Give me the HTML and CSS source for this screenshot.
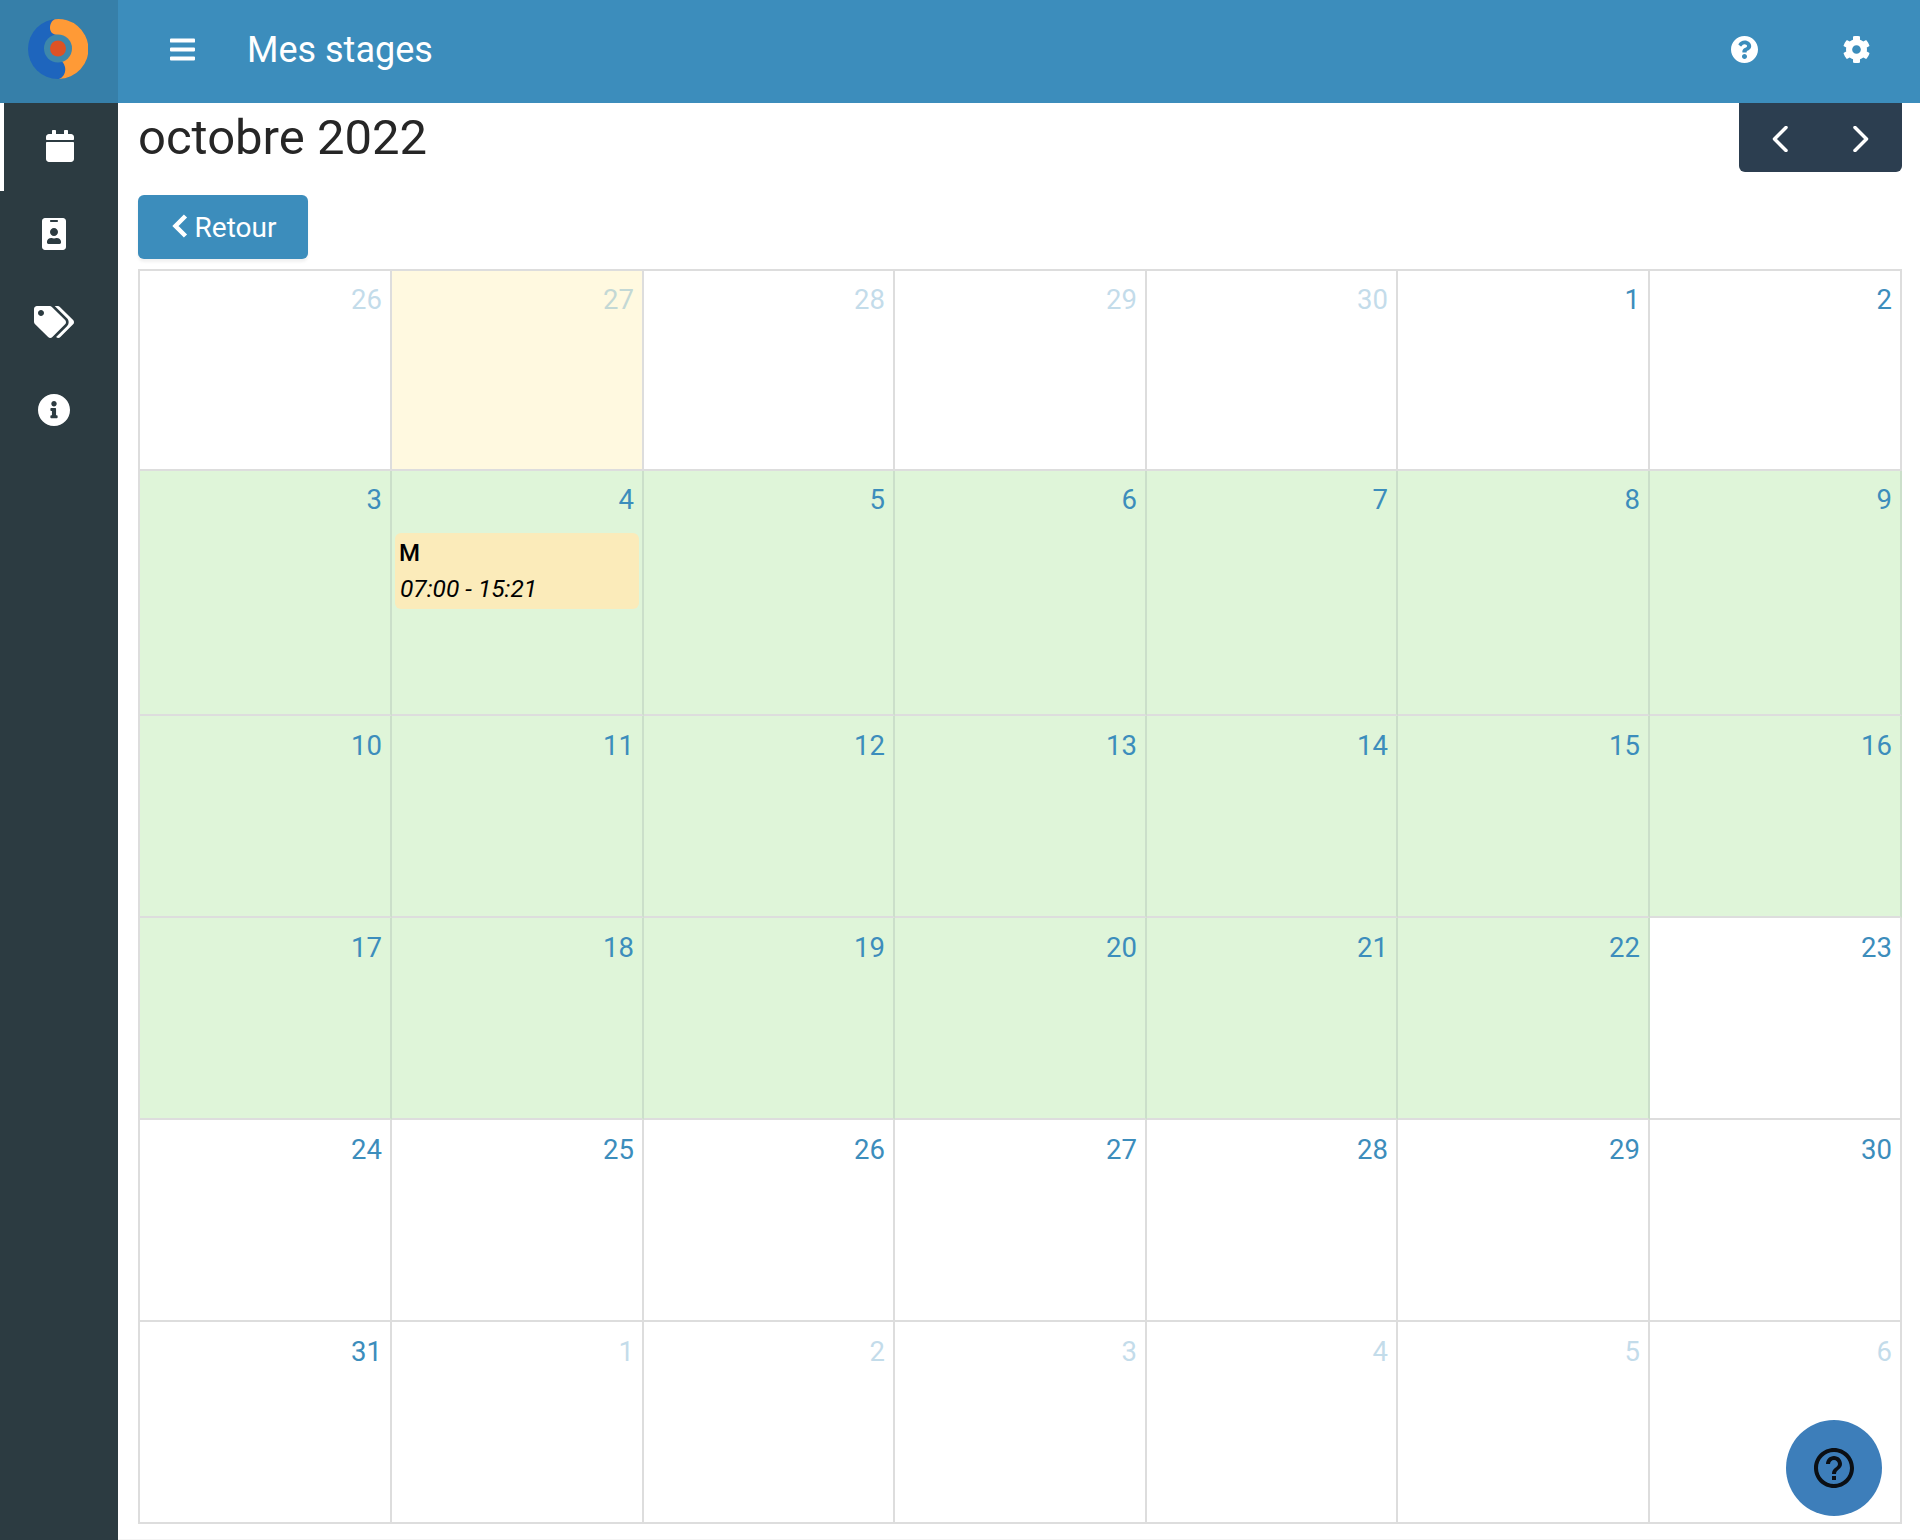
FILE: index.html
```html
<!DOCTYPE html>
<html lang="fr">
<head>
<meta charset="utf-8">
<title>Mes stages</title>
<link rel="stylesheet" href="styles.css">
</head>
<body>
<div class="app">
  <a class="brand" href="#" aria-label="Accueil">
    <svg class="logo" viewBox="0 0 60 60">
      <circle cx="30" cy="30" r="30" fill="#1e65bd"/>
      <path d="M27 .2A30 30 0 1 1 31 60C36 58 38 53 37 48C36 44 34 42 33 42A14 14 0 0 0 30 16C24 16 22 12 22 9C22 5 24 1 27 .2Z" fill="#ff9a36"/>
      <circle cx="30" cy="29.500" r="14" fill="#3d87ab"/>
      <circle cx="30" cy="29.500" r="8" fill="#dd5224"/>
    </svg>
  </a>
  <header class="topbar">
    <svg class="ico bars" viewBox="0 0 448 512"><path d="M16 132h416c8.837 0 16-7.163 16-16V76c0-8.837-7.163-16-16-16H16C7.163 60 0 67.163 0 76v40c0 8.837 7.163 16 16 16zm0 160h416c8.837 0 16-7.163 16-16v-40c0-8.837-7.163-16-16-16H16c-8.837 0-16 7.163-16 16v40c0 8.837 7.163 16 16 16zm0 160h416c8.837 0 16-7.163 16-16v-40c0-8.837-7.163-16-16-16H16c-8.837 0-16 7.163-16 16v40c0 8.837 7.163 16 16 16z"/></svg>
    <span class="page-title">Mes stages</span>
    <span class="top-actions">
      <svg class="ico top-ico" viewBox="8 8 496 496"><path d="M504 256c0 136.997-111.043 248-248 248S8 392.997 8 256C8 119.083 119.043 8 256 8s248 111.083 248 248zM262.655 90c-54.497 0-89.255 22.957-116.549 63.758-3.536 5.286-2.353 12.415 2.715 16.258l34.699 26.31c5.205 3.947 12.621 3.008 16.665-2.122 17.864-22.658 30.113-35.797 57.303-35.797 20.429 0 45.698 13.148 45.698 32.958 0 14.976-12.363 22.667-32.534 33.976C247.128 238.528 216 254.941 216 296v4c0 6.627 5.373 12 12 12h56c6.627 0 12-5.373 12-12v-1.333c0-28.462 83.186-29.647 83.186-106.667 0-58.002-60.165-102-116.531-102zM256 338c-25.365 0-46 20.635-46 46 0 25.364 20.635 46 46 46s46-20.636 46-46c0-25.365-20.635-46-46-46z"/></svg>
      <svg class="ico top-ico" viewBox="8 8 496 496"><path d="M487.4 315.7l-42.6-24.6c4.3-23.2 4.3-47 0-70.200l42.6-24.600c4.900-2.800 7.100-8.600 5.500-14-11.100-35.600-30-67.800-54.700-94.600-3.800-4.100-10-5.100-14.800-2.300L380.800 110c-17.900-15.400-38.500-27.300-60.800-35.100V25.800c0-5.600-3.900-10.500-9.400-11.700-36.700-8.200-74.300-7.800-109.200 0-5.500 1.200-9.400 6.100-9.400 11.700V75c-22.200 7.900-42.800 19.800-60.800 35.100L88.700 85.500c-4.900-2.800-11-1.900-14.800 2.300-24.700 26.700-43.600 58.900-54.700 94.600-1.700 5.400.6 11.200 5.500 14L67.300 221c-4.300 23.200-4.300 47 0 70.200l-42.600 24.600c-4.900 2.800-7.100 8.600-5.500 14 11.100 35.600 30 67.800 54.700 94.600 3.800 4.100 10 5.100 14.800 2.300l42.600-24.600c17.900 15.400 38.500 27.300 60.800 35.100v49.200c0 5.600 3.900 10.500 9.400 11.700 36.700 8.200 74.300 7.800 109.200 0 5.500-1.200 9.400-6.100 9.400-11.700v-49.200c22.200-7.900 42.800-19.800 60.800-35.100l42.600 24.600c4.900 2.800 11 1.900 14.800-2.300 24.700-26.700 43.600-58.900 54.700-94.600 1.500-5.500-.7-11.300-5.600-14.100zM256 336c-44.100 0-80-35.900-80-80s35.900-80 80-80 80 35.900 80 80-35.900 80-80 80z"/></svg>
    </span>
  </header>
  <nav class="sidebar">
    <a class="side-item active" href="#"><svg class="ico cal" viewBox="0 0 448 512"><path d="M12 192h424c6.600 0 12 5.400 12 12v260c0 26.500-21.500 48-48 48H48c-26.500 0-48-21.500-48-48V204c0-6.600 5.400-12 12-12zm436-44v-36c0-26.500-21.500-48-48-48h-48V12c0-6.600-5.400-12-12-12h-40c-6.600 0-12 5.400-12 12v52H160V12c0-6.600-5.400-12-12-12h-40c-6.600 0-12 5.400-12 12v52H48C21.500 64 0 85.500 0 112v36c0 6.600 5.400 12 12 12h424c6.600 0 12-5.400 12-12z"/></svg></a>
    <a class="side-item" href="#"><svg class="ico badge" viewBox="0 0 384 512"><path d="M336 0H48C21.500 0 0 21.500 0 48v416c0 26.500 21.500 48 48 48h288c26.500 0 48-21.500 48-48V48c0-26.500-21.500-48-48-48zM144 32h96c8.800 0 16 7.200 16 16s-7.200 16-16 16h-96c-8.800 0-16-7.200-16-16s7.200-16 16-16zm48 128c35.300 0 64 28.700 64 64s-28.700 64-64 64-64-28.700-64-64 28.700-64 64-64zm112 236.800c0 10.600-10 19.200-22.400 19.200H102.400C90 416 80 407.400 80 396.800v-19.200c0-31.800 30.100-57.600 67.200-57.600h5c12.300 5.100 25.700 8 39.800 8s27.600-2.900 39.800-8h5c37.100 0 67.200 25.800 67.200 57.600v19.200z"/></svg></a>
    <a class="side-item" href="#"><svg class="ico tags" viewBox="0 0 640 512"><path d="M497.941 225.941L286.059 14.059A48 48 0 0 0 252.118 0H48C21.490 0 0 21.490 0 48v204.118a48 48 0 0 0 14.059 33.941l211.882 211.882c18.744 18.745 49.136 18.746 67.882 0l204.118-204.118c18.745-18.745 18.745-49.137 0-67.882zM112 160c-26.510 0-48-21.490-48-48s21.490-48 48-48 48 21.490 48 48-21.490 48-48 48zm513.941 133.823L421.823 497.941c-18.745 18.745-49.137 18.745-67.882 0l-.36-.36L527.640 323.522c16.999-16.999 26.360-39.600 26.360-63.640s-9.362-46.641-26.360-63.640L331.397 0h48.721a48 48 0 0 1 33.941 14.059l211.882 211.882c18.745 18.745 18.745 49.137 0 67.882z"/></svg></a>
    <a class="side-item" href="#"><svg class="ico info" viewBox="8 8 496 496"><path d="M256 8C119.043 8 8 119.083 8 256c0 136.997 111.043 248 248 248s248-111.003 248-248C504 119.083 392.957 8 256 8zm0 110c23.196 0 42 18.804 42 42s-18.804 42-42 42-42-18.804-42-42 18.804-42 42-42zm56 254c0 6.627-5.373 12-12 12h-88c-6.627 0-12-5.373-12-12v-24c0-6.627 5.373-12 12-12h12v-64h-12c-6.627 0-12-5.373-12-12v-24c0-6.627 5.373-12 12-12h64c6.627 0 12 5.373 12 12v100h12c6.627 0 12 5.373 12 12v24z"/></svg></a>
  </nav>
  <main class="content">
    <div class="title-row">
      <h1 class="month">octobre 2022</h1>
      <div class="month-nav">
        <button class="nav-btn" aria-label="Précédent"><svg class="chev" viewBox="0 0 16 26"><path d="M14 1.500L2.500 13 14 24.500"/></svg></button>
        <button class="nav-btn" aria-label="Suivant"><svg class="chev" viewBox="0 0 16 26"><path d="M2 1.500L13.500 13 2 24.500"/></svg></button>
      </div>
    </div>
    <button class="back"><svg class="back-chev" viewBox="0 0 18 26"><path d="M15 3L5 13l10 10"/></svg>Retour</button>
    <table class="cal-table">
      <tbody>
        <tr class="row-a">
          <td class="other"><span>26</span></td><td class="other today"><span>27</span></td><td class="other"><span>28</span></td><td class="other"><span>29</span></td><td class="other"><span>30</span></td><td><span>1</span></td><td><span>2</span></td>
        </tr>
        <tr class="row-b">
          <td class="stage"><span>3</span></td>
          <td class="stage"><span>4</span>
            <div class="event"><strong>M</strong><em>07:00 - 15:21</em></div>
          </td>
          <td class="stage"><span>5</span></td><td class="stage"><span>6</span></td><td class="stage"><span>7</span></td><td class="stage"><span>8</span></td><td class="stage"><span>9</span></td>
        </tr>
        <tr class="row-c">
          <td class="stage"><span>10</span></td><td class="stage"><span>11</span></td><td class="stage"><span>12</span></td><td class="stage"><span>13</span></td><td class="stage"><span>14</span></td><td class="stage"><span>15</span></td><td class="stage"><span>16</span></td>
        </tr>
        <tr class="row-c">
          <td class="stage"><span>17</span></td><td class="stage"><span>18</span></td><td class="stage"><span>19</span></td><td class="stage"><span>20</span></td><td class="stage"><span>21</span></td><td class="stage"><span>22</span></td><td><span>23</span></td>
        </tr>
        <tr class="row-c">
          <td><span>24</span></td><td><span>25</span></td><td><span>26</span></td><td><span>27</span></td><td><span>28</span></td><td><span>29</span></td><td><span>30</span></td>
        </tr>
        <tr class="row-c">
          <td><span>31</span></td><td class="other"><span>1</span></td><td class="other"><span>2</span></td><td class="other"><span>3</span></td><td class="other"><span>4</span></td><td class="other"><span>5</span></td><td class="other"><span>6</span></td>
        </tr>
      </tbody>
    </table>
  </main>
  <button class="fab" aria-label="Aide">
    <svg viewBox="0 0 24 24"><path d="M11 18h2v-2h-2v2zm1-16C6.480 2 2 6.480 2 12s4.480 10 10 10 10-4.480 10-10S17.520 2 12 2zm0 18c-4.410 0-8-3.590-8-8s3.590-8 8-8 8 3.590 8 8-3.590 8-8 8zm0-14c-2.210 0-4 1.790-4 4h2c0-1.100.9-2 2-2s2 .9 2 2c0 2-3 1.750-3 5h2c0-2.250 3-2.500 3-5 0-2.210-1.790-4-4-4z"/></svg>
  </button>
</div>
</body>
</html>
```
FILE: styles.css
```css
* { box-sizing: border-box; }
html, body { margin: 0; height: 100%; }
body { font-family: Roboto, "Liberation Sans", sans-serif; color: #262626; background: #fff; }
.app {
  position: relative;
  display: grid;
  grid-template-columns: 118px 1fr;
  grid-template-rows: 103px 1fr;
  height: 1540px;
  overflow: hidden;
}
.brand { background: #367fa9; display: flex; align-items: center; justify-content: center; }
.logo { width: 60px; height: 60px; margin-left: -2px; margin-top: -5px; }
.topbar {
  background: #3c8dbc;
  display: flex;
  align-items: center;
  color: #fff;
  padding-left: 52px;
}
.ico { fill: currentColor; display: block; }
.bars { width: 25px; height: 29px; margin-top: -5px; }
.page-title { font-size: 36px; margin-left: 52px; line-height: 1; margin-top: -3px; }
.top-actions { margin-left: auto; display: flex; gap: 85px; padding-right: 50px; margin-top: -5px; }
.top-ico { width: 27px; height: 27px; }
.sidebar { background: #2c3b41; color: #fff; }
.side-item {
  display: flex;
  align-items: center;
  justify-content: center;
  height: 88px;
  padding: 0 10px 2px 0;
  color: #fff;
}
.side-item.active { border-left: 4px solid #fff; padding-right: 6px; }
.cal { width: 28px; height: 32px; margin-left: 4px; }
.badge { width: 24px; height: 32px; }
.tags { width: 40px; height: 32px; }
.info { width: 32px; height: 32px; }
.content { padding: 0 18px 0 20px; min-width: 0; border-bottom: 1px solid #f4f4f4; }
.title-row { display: flex; justify-content: space-between; align-items: flex-start; height: 92px; }
.month { margin: 7px 0 0 0; font-size: 49px; font-weight: 400; line-height: 56px; color: #262626; }
.month-nav {
  width: 163px;
  height: 69px;
  background: #2c3e50;
  border-radius: 0 0 6px 6px;
  display: flex;
}
.nav-btn { flex: 1; background: none; border: 0; padding: 2px 0 0; display: flex; align-items: center; justify-content: center; }
.chev { width: 16px; height: 26px; fill: none; stroke: #fff; stroke-width: 3.500; stroke-linecap: round; stroke-linejoin: round; }
.back {
  display: flex;
  align-items: center;
  justify-content: center;
  width: 170px;
  height: 64px;
  background: #3c8dbc;
  color: #fff;
  border: 0;
  border-radius: 6px;
  font: 400 28px Roboto, sans-serif;
  box-shadow: 0 3px 3px rgba(0, 0, 0, .06);
  padding: 0;
}
.back-chev { width: 19px; height: 26px; fill: none; stroke: #fff; stroke-width: 4.500; margin-right: 6px; margin-top: -3px; }
.cal-table {
  width: 100%;
  margin-top: 10px;
  border-collapse: separate;
  border-spacing: 0;
  table-layout: fixed;
  border-top: 2px solid #ddd;
  border-left: 2px solid #ddd;
}
.cal-table td {
  width: 252px;
  border-right: 2px solid #ddd;
  border-bottom: 2px solid #ddd;
  padding: 0;
  vertical-align: top;
  text-align: right;
  font-size: 27.500px;
  color: #3c8dbc;
}
.cal-table td:nth-child(3),
.cal-table td:nth-child(5) { width: 251px; }
.cal-table td > span { display: block; padding: 14px 8px 0 0; line-height: 32px; }
.row-a { height: 200px; }
.row-b { height: 245px; }
.row-c { height: 202px; }
.cal-table .row-a td > span,
.cal-table .row-b td > span { padding-top: 13px; }
.cal-table td.other > span { opacity: .3; }
.cal-table td.today { background: #fff9e0; }
.cal-table td.stage { background: #dff5d9; border-right-color: #cbdfca; }
.event {
  margin: 17px 3px 0 3px;
  height: 76px;
  background: #fbebba;
  border-radius: 6px;
  padding: 2px 4px;
  text-align: left;
  color: #000;
  font-size: 24px;
}
.event strong { display: block; font-weight: 500; line-height: 36px; }
.event em { display: block; font-style: italic; font-size: 24.500px; line-height: 35px; padding-left: 1px; }
.fab {
  position: absolute;
  left: 1786px;
  top: 1420px;
  width: 96px;
  height: 96px;
  border: 0;
  border-radius: 50%;
  background: #3d7eba;
  display: flex;
  align-items: center;
  justify-content: center;
  padding: 0;
}
.fab svg { width: 48px; height: 48px; fill: #0b0f14; }
```
